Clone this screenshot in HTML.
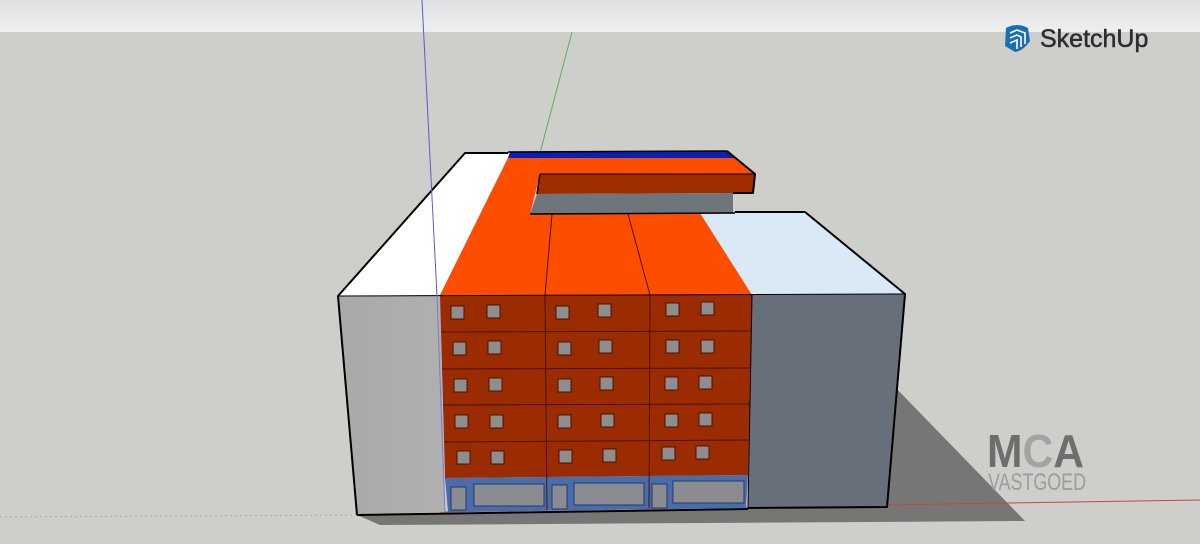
<!DOCTYPE html>
<html><head><style>
html,body{margin:0;padding:0;width:1200px;height:544px;overflow:hidden;background:#cececa}
svg{display:block}
</style></head><body>
<svg width="1200" height="544" viewBox="0 0 1200 544" xmlns="http://www.w3.org/2000/svg">
<defs>
<linearGradient id="sky" x1="0" y1="0" x2="0" y2="1"><stop offset="0" stop-color="#dfe1e3"/><stop offset="1" stop-color="#edeff0"/></linearGradient>
<linearGradient id="lf" x1="0" y1="0" x2="1" y2="0"><stop offset="0" stop-color="#a9a9a9"/><stop offset="1" stop-color="#b0b0b0"/></linearGradient>
</defs>
<rect x="0" y="0" width="1200" height="32" fill="url(#sky)"/>
<rect x="0" y="32" width="1200" height="512" fill="#cececa"/>
<polygon points="357,515 887,507 890,382 1025,521 380,525" fill="#767674"/>
<line x1="440" y1="512" x2="1200" y2="500" stroke="#c44" stroke-width="1"/>
<line x1="0" y1="517" x2="357" y2="515" stroke="#c99" stroke-width="1" stroke-dasharray="2,3"/>
<line x1="572" y1="32" x2="540" y2="153" stroke="#5fae5f" stroke-width="1"/>
<polygon points="338,296 465,153 510,153 440,295" fill="#ffffff"/>
<polygon points="338,296 440,295 445,512 357,515" fill="url(#lf)"/>
<polygon points="510,152 727,151 735,158 508,158" fill="#0b1fb5"/>
<polygon points="508,158 735,158 755,174 540,174 530,214 700,213 755,295 440,295" fill="#fd4e00"/>
<polygon points="540,174 755,174 753,193 537,194" fill="#a02d00"/>
<polygon points="537,194 733,193 733,213 530,214" fill="#6e767c"/>
<polygon points="700,213 805,212 905,294 752,295" fill="#d9e9f5"/>
<polygon points="752,295 905,294 887,507 748,508" fill="#67707a"/>
<polygon points="440,295 752,295 748,475 445,478" fill="#9b2b00"/>
<polygon points="445,478 748,475 746,508 448,512" fill="#4a6ca8"/>
<g stroke="#4a1200" stroke-width="1" fill="none">
<line x1="441" y1="332" x2="751" y2="331"/>
<line x1="442" y1="369" x2="750" y2="368"/>
<line x1="443" y1="405" x2="750" y2="404"/>
<line x1="444" y1="442" x2="749" y2="440"/>
<line x1="545" y1="295" x2="547" y2="510"/>
<line x1="650" y1="295" x2="649" y2="508"/>
<line x1="552" y1="214" x2="545" y2="295"/>
<line x1="628" y1="214" x2="650" y2="295"/>
</g>
<g fill="#8e8e8e" stroke="#4a1200" stroke-width="1">
<rect x="451" y="306" width="13" height="13"/><rect x="487" y="305" width="13" height="13"/>
<rect x="556" y="306" width="13" height="13"/><rect x="598" y="304" width="13" height="13"/>
<rect x="666" y="303" width="13" height="13"/><rect x="701" y="302" width="13" height="13"/>
<rect x="453" y="342" width="13" height="13"/><rect x="488" y="341" width="13" height="13"/>
<rect x="558" y="342" width="13" height="13"/><rect x="599" y="340" width="13" height="13"/>
<rect x="666" y="340" width="13" height="13"/><rect x="701" y="340" width="13" height="13"/>
<rect x="454" y="379" width="13" height="13"/><rect x="489" y="378" width="13" height="13"/>
<rect x="558" y="379" width="13" height="13"/><rect x="600" y="377" width="13" height="13"/>
<rect x="665" y="377" width="13" height="13"/><rect x="699" y="376" width="13" height="13"/>
<rect x="455" y="415" width="13" height="13"/><rect x="490" y="415" width="13" height="13"/>
<rect x="558" y="415" width="13" height="13"/><rect x="601" y="414" width="13" height="13"/>
<rect x="665" y="414" width="13" height="13"/><rect x="699" y="413" width="13" height="13"/>
<rect x="457" y="451" width="13" height="13"/><rect x="491" y="451" width="13" height="13"/>
<rect x="559" y="450" width="13" height="13"/><rect x="603" y="449" width="13" height="13"/>
<rect x="662" y="447" width="13" height="13"/><rect x="696" y="446" width="13" height="13"/>
</g>
<g fill="#8a8c92" stroke="#1f3a70" stroke-width="1">
<rect x="451" y="487" width="15" height="23"/><rect x="474" y="484" width="70" height="22"/>
<rect x="552" y="485" width="15" height="24"/><rect x="574" y="483" width="70" height="22"/>
<rect x="652" y="484" width="15" height="24"/><rect x="673" y="481" width="71" height="22"/>
</g>
<g stroke="#000" stroke-width="2" fill="none" stroke-linejoin="round">
<polyline points="357,515 338,296 465,153 508,153"/>
<line x1="357" y1="515" x2="748" y2="509"/>
<polyline points="748,508 887,507 905,294 805,212 735,212"/>
<polyline points="727,151 755,174 753,193 733,193"/>
<line x1="540" y1="174" x2="755" y2="174" stroke-width="1"/>
<polyline points="537,194 540,174" stroke-width="1.5"/>
<line x1="530" y1="214" x2="735" y2="213" stroke-width="1.5"/>
<line x1="508" y1="152" x2="727" y2="151" stroke-width="1.5"/>
<line x1="338" y1="296" x2="905" y2="294" stroke-width="1"/>
<line x1="752" y1="295" x2="748" y2="508" stroke-width="1"/>
</g>
<line x1="422" y1="0" x2="437" y2="296" stroke="#5a5acc" stroke-width="1"/>
<line x1="437" y1="296" x2="445" y2="512" stroke="#7777dd" stroke-width="1"/>
<!-- SketchUp logo -->
<g transform="translate(1003,24)">
<path d="M3,4 Q14,-2 25,4 L27,17 Q20,27 12,28 L2,22 Z" fill="#1a6fb4"/>
<path d="M7,9 L14,6 L22,9 L22,20 M7,14 L14,11 L18,13 L18,23 M7,19 L14,16 L14,25" stroke="#fff" stroke-width="1.6" fill="none"/>
</g>
<text x="1040" y="47" font-family="Liberation Sans, sans-serif" font-size="25" fill="#2b2d33" stroke="#2b2d33" stroke-width="0.5">SketchUp</text>
<!-- MCA logo -->
<text x="987" y="467" font-family="Liberation Sans, sans-serif" font-weight="bold" font-size="46" fill="#6e6e6e" textLength="97" lengthAdjust="spacingAndGlyphs">M<tspan fill="#a3a3a3">C</tspan>A</text>
<text x="988" y="490" font-family="Liberation Sans, sans-serif" font-size="24" fill="#9c9c9c" textLength="98" lengthAdjust="spacingAndGlyphs">VASTGOED</text>
</svg>
</body></html>
